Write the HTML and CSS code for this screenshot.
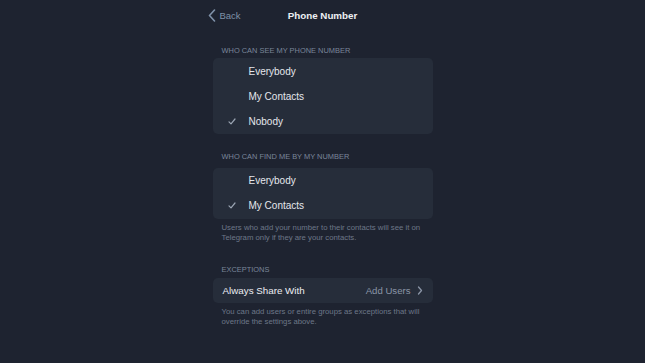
FILE: index.html
```html
<!DOCTYPE html>
<html>
<head>
<meta charset="utf-8">
<link rel="stylesheet" href="styles.css">
</head>
<body>
<div class="screen">
  <div class="nav">
    <div class="back">
      <svg class="back-icon" width="8" height="13" viewBox="0 0 8 13"><path d="M6.5 1 L1.5 6.5 L6.5 12" fill="none" stroke="#7f91a8" stroke-width="1.6" stroke-linecap="round" stroke-linejoin="round"/></svg>
      <span>Back</span>
    </div>
    <div class="title">Phone Number</div>
    <div></div>
  </div>

  <div class="content">
    <div class="section-header first">WHO CAN SEE MY PHONE NUMBER</div>
    <div class="card list-top">
      <div class="row"><span class="check"></span><span class="label">Everybody</span></div>
      <div class="row"><span class="check"></span><span class="label">My Contacts</span></div>
      <div class="row"><span class="check"><svg width="8" height="7" viewBox="0 0 8 7"><path d="M1 3.8 L3 5.8 L7 1" fill="none" stroke="#9aa4b2" stroke-width="1.2" stroke-linecap="round" stroke-linejoin="round"/></svg></span><span class="label">Nobody</span></div>
    </div>

    <div class="section-header second">WHO CAN FIND ME BY MY NUMBER</div>
    <div class="card list-bottom">
      <div class="row"><span class="check"></span><span class="label">Everybody</span></div>
      <div class="row"><span class="check"><svg width="8" height="7" viewBox="0 0 8 7"><path d="M1 3.8 L3 5.8 L7 1" fill="none" stroke="#9aa4b2" stroke-width="1.2" stroke-linecap="round" stroke-linejoin="round"/></svg></span><span class="label">My Contacts</span></div>
    </div>
    <div class="footer">Users who add your number to their contacts will see it on Telegram only if they are your contacts.</div>

    <div class="section-header third">EXCEPTIONS</div>
    <div class="card">
      <div class="row link">
        <span class="link-label">Always Share With</span>
        <span class="link-value">Add Users
          <svg width="6" height="9" viewBox="0 0 6 9"><path d="M1.5 1 L4.5 4.5 L1.5 8" fill="none" stroke="#8a95a6" stroke-width="1.3" stroke-linecap="round" stroke-linejoin="round"/></svg>
        </span>
      </div>
    </div>
    <div class="footer">You can add users or entire groups as exceptions that will override the settings above.</div>
  </div>
</div>
</body>
</html>
```

FILE: styles.css
```css
html, body {
  margin: 0;
  padding: 0;
  background: #1e2330;
  font-family: "Liberation Sans", Arial, sans-serif;
  width: 645px;
  height: 363px;
  overflow: hidden;
}
.screen {
  width: 645px;
  height: 363px;
  background: #1e2330;
}
.nav {
  width: 236px;
  margin: 0 auto;
  height: 30px;
  display: grid;
  grid-template-columns: 1fr auto 1fr;
  align-items: center;
}
.back {
  display: flex;
  align-items: center;
  gap: 4px;
  padding-left: 3px;
  color: #7f91a8;
  font-size: 9.5px;
}
.back-icon { display: block; }
.title {
  color: #eef0f3;
  font-size: 9.8px;
  font-weight: bold;
}
.content {
  width: 220px;
  margin: 0 auto;
}
.section-header {
  color: #7a869a;
  font-size: 7.45px;
  line-height: 10px;
  padding-left: 9px;
  padding-bottom: 3px;
}
.section-header.first { padding-top: 16px; padding-bottom: 2px; }
.section-header.second { padding-top: 18px; padding-bottom: 6px; }
.section-header.third { padding-top: 22px; }
.card {
  background: #262d3a;
  border-radius: 5px;
}
.card.list-top { padding-top: 1px; }
.card.list-bottom { padding-bottom: 1px; }
.row {
  height: 25px;
  display: flex;
  align-items: center;
}
.check {
  width: 36px;
  display: flex;
  justify-content: flex-start;
  padding-left: 15px;
  box-sizing: border-box;
}
.check svg { display: block; }
.label {
  color: #e4e7ec;
  font-size: 10px;
}
.footer {
  color: #6d7788;
  font-size: 7.75px;
  line-height: 10px;
  padding: 4px 8px 0 9px;
}
.link {
  justify-content: space-between;
  padding: 0 10px;
}
.link-label {
  color: #eceef2;
  font-size: 9.8px;
}
.link-value {
  color: #8a95a6;
  font-size: 9.6px;
  display: flex;
  align-items: center;
  gap: 6px;
}
.link-value svg { display: block; }
```
